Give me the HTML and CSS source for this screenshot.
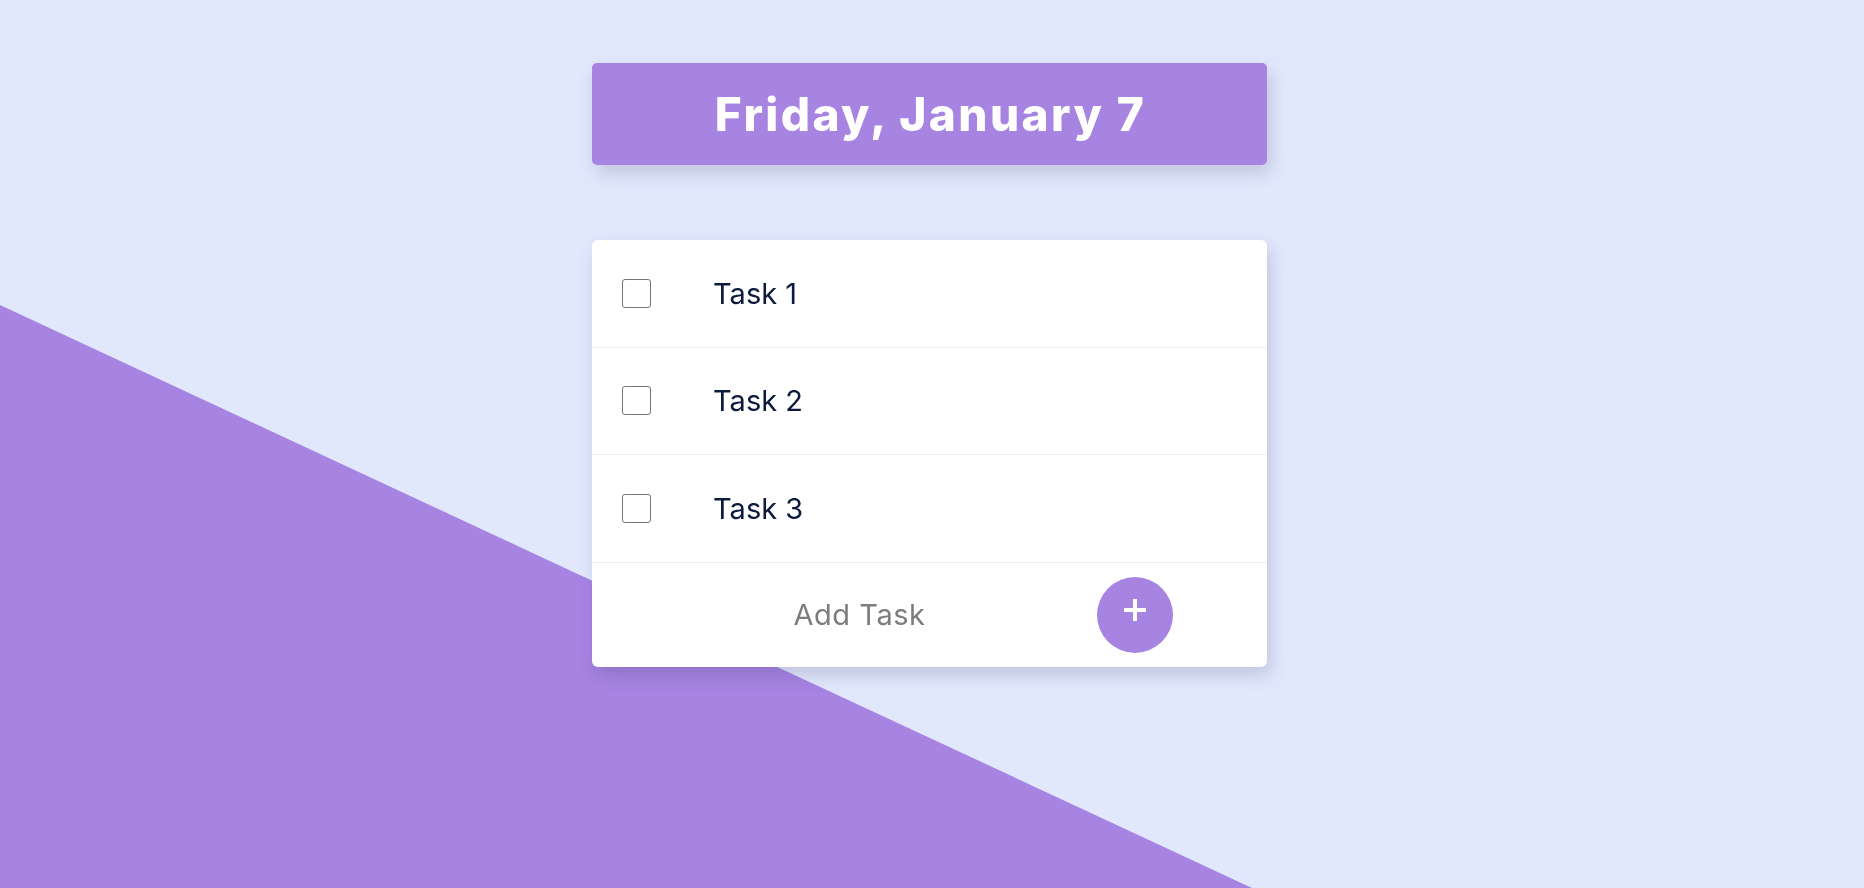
FILE: index.html
```html
<!DOCTYPE html>
<html lang="en">
<head>
<meta charset="utf-8">
<title>Todo</title>
<link rel="stylesheet" href="styles.css">
</head>
<body>
<div class="bg-shape"></div>
<main class="app">
  <header class="date-box">
    <h1 class="date-title">Friday, January 7</h1>
  </header>
  <section class="card">
    <div class="task-row">
      <input type="checkbox" class="task-check">
      <span class="task-label">Task 1</span>
    </div>
    <div class="task-row">
      <input type="checkbox" class="task-check">
      <span class="task-label">Task 2</span>
    </div>
    <div class="task-row">
      <input type="checkbox" class="task-check">
      <span class="task-label">Task 3</span>
    </div>
    <div class="add-row">
      <input type="text" class="add-input" placeholder="Add Task">
      <button class="add-btn" aria-label="Add">
        <svg class="plus" width="22" height="22" viewBox="0 0 22 22"><rect x="9" y="0" width="4" height="22" fill="#fff"/><rect x="0" y="9" width="22" height="4" fill="#fff"/></svg>
      </button>
    </div>
  </section>
</main>
</body>
</html>
```

FILE: styles.css
```css
html, body {
  margin: 0;
  padding: 0;
  height: 100%;
}
body {
  background: #e2e8fc;
  font-family: "Inter", "Noto Sans", sans-serif;
  overflow: hidden;
}
.bg-shape {
  position: fixed;
  left: 0;
  top: 0;
  width: 100%;
  height: 100%;
  background: #a784e2;
  clip-path: polygon(0 305px, 1252px 888px, 1252px 2000px, 0 2000px);
  z-index: 0;
}
.app {
  position: relative;
  z-index: 1;
  width: 675px;
  margin: 0 auto;
  padding: 63px 5px 0 0;
  display: flex;
  flex-direction: column;
  gap: 75px;
}
.date-box {
  height: 102px;
  background: #a784e2;
  border-radius: 5px;
  box-shadow: 4px 8px 18px rgba(40, 40, 90, 0.18);
  display: flex;
  align-items: center;
  justify-content: center;
}
.date-title {
  margin: 0;
  color: #ffffff;
  font-family: "Inter", sans-serif;
  font-weight: 800;
  font-size: 46px;
  letter-spacing: 2.4px;
  padding-left: 2px;
}
.card {
  background: #ffffff;
  border-radius: 6px;
  box-shadow: 4px 8px 18px rgba(40, 40, 90, 0.18);
  overflow: hidden;
}
.task-row {
  height: 107.5px;
  box-sizing: border-box;
  border-bottom: 1px solid #ededf0;
  display: flex;
  align-items: center;
  padding-left: 30px;
}
.task-check {
  appearance: none;
  -webkit-appearance: none;
  margin: 0;
  width: 29px;
  height: 29px;
  box-sizing: border-box;
  border: 1.3px solid #767676;
  border-radius: 3px;
  background: #fff;
  flex: none;
}
.task-label {
  margin-left: 62px;
  color: #0b1a3d;
  font-size: 29px;
  font-weight: 400;
}
.add-row {
  height: 104.5px;
  display: flex;
  align-items: center;
  padding: 0 94px 0 30px;
}
.add-input {
  flex: 1;
  min-width: 0;
  border: none;
  outline: none;
  background: transparent;
  font-family: "Inter", sans-serif;
  font-size: 29px;
  letter-spacing: 0.5px;
  text-align: center;
  color: #333;
  padding: 0;
}
.add-input::placeholder {
  color: #7d7d7d;
}
.add-btn {
  width: 76px;
  height: 76px;
  border-radius: 50%;
  border: none;
  background: #a784e2;
  padding: 0 0 10px 0;
  display: flex;
  align-items: center;
  justify-content: center;
  flex: none;
}
.plus {
  display: block;
}
```
